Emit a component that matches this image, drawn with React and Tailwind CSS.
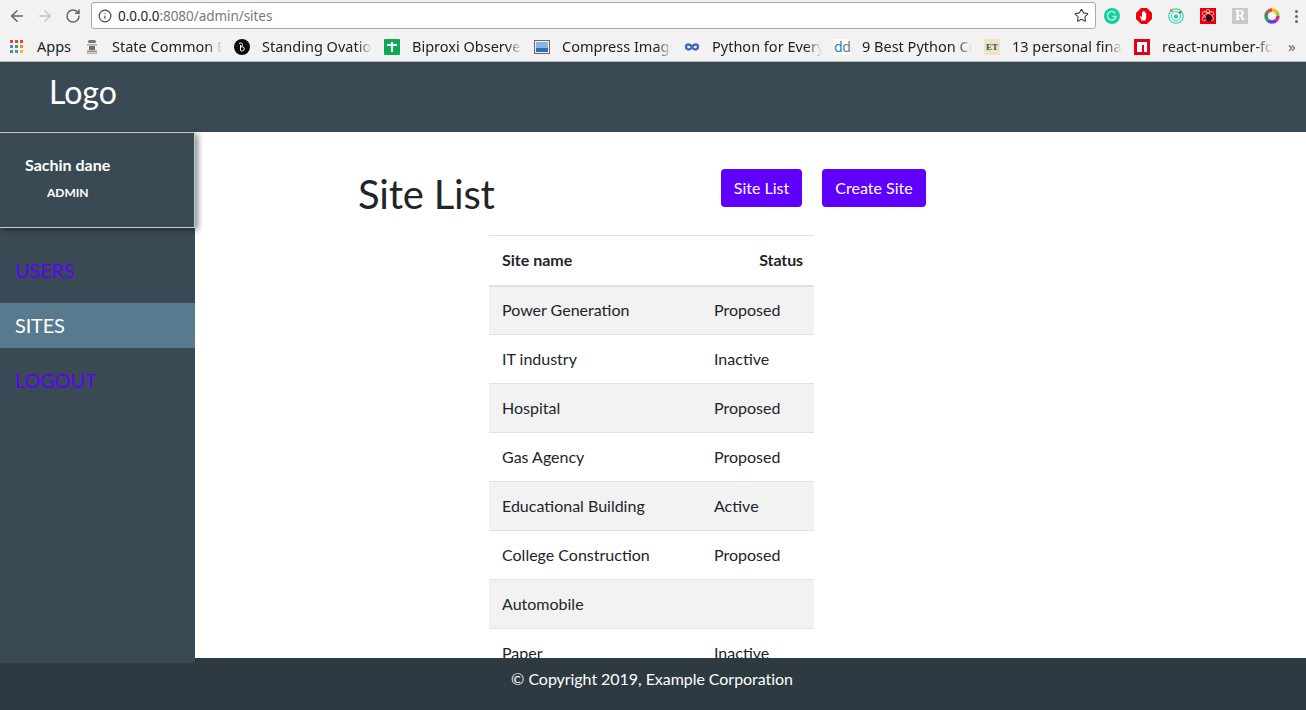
import { ArrowLeft, ArrowRight, RotateCw, Info, Star } from "lucide-react";

const bookmarks = [
  { label: "State Common Entrance", icon: "emblem" },
  { label: "Standing Ovation Award", icon: "ovation" },
  { label: "Biproxi Observer Page", icon: "biproxi" },
  { label: "Compress Images Online", icon: "compress" },
  { label: "Python for Everybody", icon: "infinity" },
  { label: "9 Best Python Courses", icon: "dd" },
  { label: "13 personal finance", icon: "et" },
  { label: "react-number-format", icon: "npm" },
];

const sites = [
  ["Power Generation", "Proposed"],
  ["IT industry", "Inactive"],
  ["Hospital", "Proposed"],
  ["Gas Agency", "Proposed"],
  ["Educational Building", "Active"],
  ["College Construction", "Proposed"],
  ["Automobile", ""],
  ["Paper", "Inactive"],
];

function BookmarkIcon({ type }) {
  if (type === "emblem")
    return (
      <svg width="16" height="16" viewBox="0 0 16 16">
        <rect x="4" y="1" width="8" height="3" rx="1.500" fill="#77776f" />
        <rect x="3" y="5" width="10" height="1.500" fill="#aaaaa0" />
        <rect x="5" y="7" width="6" height="4" fill="#6f6f67" />
        <rect x="3" y="11.500" width="10" height="1.500" fill="#8d8d84" />
        <rect x="3" y="13.500" width="10" height="1.500" fill="#b5b5ac" />
      </svg>
    );
  if (type === "ovation")
    return (
      <svg width="16" height="16" viewBox="0 0 16 16" fill="none">
        <circle cx="8" cy="8" r="8" fill="#0d0d0d" />
        <path d="M5 4.500c2-1 3.500-.5 3.500 1S7 7.500 6.800 7.800c2.500-.3 3.700.8 3.500 2.300S8 12.500 6.500 11.500V6" stroke="#fff" strokeWidth="1" />
      </svg>
    );
  if (type === "biproxi")
    return (
      <svg width="16" height="16" viewBox="0 0 16 16">
        <rect width="16" height="16" rx="1" fill="#0fa958" />
        <path d="M3 6h10M8 3v10" stroke="#fff" strokeWidth="2" />
      </svg>
    );
  if (type === "compress")
    return (
      <svg width="16" height="16" viewBox="0 0 16 16">
        <rect x="0.500" y="1.500" width="15" height="13" fill="#eef2f7" stroke="#667" />
        <rect x="2" y="3" width="12" height="6" fill="#8fb2e0" />
        <rect x="2" y="9" width="12" height="4" fill="#2f6db5" />
      </svg>
    );
  if (type === "infinity")
    return (
      <svg width="16" height="16" viewBox="0 0 16 16" fill="none">
        <path
          d="M8 8C7 6.200 6 5.500 4.500 5.500a2.500 2.500 0 0 0 0 5C6 10.500 7 9.800 8 8c1-1.800 2-2.500 3.500-2.500a2.500 2.500 0 0 1 0 5C10 10.500 9 9.800 8 8z"
          stroke="#3f68c8"
          strokeWidth="2.400"
        />
      </svg>
    );
  if (type === "dd")
    return (
      <div className="w-4 h-4 bg-white text-[14px] leading-4 text-center tracking-[-0.5px] font-['Noto_Sans',sans-serif]">
        <span className="text-[#1a7fd6]">d</span>
        <span className="text-[#777]">d</span>
      </div>
    );
  if (type === "et")
    return (
      <div className="w-4 h-4 bg-[#f0e2c4] text-[#2f5560] text-[9px] leading-4 font-bold text-center font-['Liberation_Serif',serif]">
        ET
      </div>
    );
  return (
    <svg width="16" height="16" viewBox="0 0 16 16">
      <rect width="16" height="16" fill="#e2001a" />
      <path d="M3 3h10v10h-3V6H8v7H3z" fill="#fff" />
    </svg>
  );
}

function AppsIcon() {
  const colors = ["#ea4335", "#ea4335", "#ea4335", "#4285f4", "#34a853", "#ea8a35", "#34a853", "#4285f4", "#fbbc05"];
  return (
    <div className="grid grid-cols-3 gap-[2px] w-[13px] h-[13px]">
      {colors.map((c, i) => (
        <span key={i} className="w-[3px] h-[3px]" style={{ background: c }} />
      ))}
    </div>
  );
}

function BrowserChrome() {
  return (
    <div className="bg-[#f2f2f2] h-[62px] border-b border-[#b8b8b8] font-['Noto_Sans',sans-serif]">
      {/* Toolbar */}
      <div className="h-[32px] flex items-center">
        <div className="w-[91px] flex items-center pl-[8px] gap-[10px] shrink-0">
          <ArrowLeft size={18} strokeWidth={2} className="text-[#5f6368]" />
          <ArrowRight size={18} strokeWidth={2} className="text-[#c4c6c9]" />
          <RotateCw size={16} strokeWidth={2.2} className="text-[#5f6368] ml-[1px]" />
        </div>
        <div className="w-[1005px] h-[27px] mt-[-1px] bg-white border border-[#a9a9a9] rounded-[3px] flex items-center pl-[6px] pr-[5px]">
          <Info size={14} strokeWidth={2} className="text-[#444]" />
          <span className="ml-[6px] mt-[1px] text-[13.500px] text-[#222] tracking-[-0.05px]">
            0.0.0.0<span className="text-[#77797c]">:8080/admin/sites</span>
          </span>
          <Star size={15} strokeWidth={1.8} className="ml-auto mr-[1px] text-[#444]" />
        </div>
        <div className="flex items-center ml-[8px] gap-[16px]">
          <svg width="16" height="16" viewBox="0 0 16 16" fill="none">
            <circle cx="8" cy="8" r="8" fill="#12cf9f" />
            <path d="M11.300 5.300A4.300 4.300 0 1 0 12 8.500H8.500" stroke="#c9f5e8" strokeWidth="1.300" />
          </svg>
          <svg width="16" height="16" viewBox="0 0 16 16">
            <path d="M5 0h6l5 5v6l-5 5H5l-5-5V5z" fill="#ee0010" />
            <path d="M5.500 12.500 L4 8.500l1 -.5 1 1.500V4h1v3.500V3h1.200v4.500V3.500h1V8V5h1v4.500c0 1.500-.6 3-1.200 3z" fill="#fff" />
          </svg>
          <svg width="16" height="16" viewBox="0 0 16 16" fill="none">
            <circle cx="8" cy="8" r="7.200" stroke="#1fe0b0" strokeWidth="1.200" />
            <circle cx="8" cy="8" r="4.500" stroke="#1fe0b0" strokeWidth="1" />
            <circle cx="8" cy="8.500" r="2" fill="#14cfa0" />
            <circle cx="3.500" cy="2.500" r="1.800" fill="#f08a3c" />
            <circle cx="12" cy="4.500" r="1.300" fill="#e0352c" />
          </svg>
          <svg width="16" height="16" viewBox="0 0 16 16" fill="none">
            <rect width="16" height="16" fill="#e8000f" />
            <ellipse cx="8" cy="8" rx="6.500" ry="2.500" transform="rotate(35 8 8)" stroke="#f7b5b5" strokeWidth="1" />
            <ellipse cx="8" cy="8" rx="6.500" ry="2.500" transform="rotate(-35 8 8)" stroke="#f7b5b5" strokeWidth="1" />
            <circle cx="8" cy="3.500" r="2" stroke="#f7b5b5" strokeWidth="1" />
            <ellipse cx="9" cy="10" rx="3" ry="3.500" fill="#2a1212" />
          </svg>
          <div className="w-4 h-4 bg-[#c9c9c9] text-white text-[14px] leading-4 text-center font-bold font-['Liberation_Serif',serif]">R</div>
          <svg width="16" height="16" viewBox="0 0 16 16" fill="none">
            <path d="M8 2a6 6 0 0 1 4.240 1.760" stroke="#f5c400" strokeWidth="3.500" />
            <path d="M12.240 3.760A6 6 0 0 1 14 8" stroke="#9acd32" strokeWidth="3.500" />
            <path d="M14 8a6 6 0 0 1-1.760 4.240" stroke="#e91e8c" strokeWidth="3.500" />
            <path d="M12.240 12.240A6 6 0 0 1 8 14" stroke="#8a2be2" strokeWidth="3.500" />
            <path d="M8 14a6 6 0 0 1-4.240-1.760" stroke="#3f51d8" strokeWidth="3.500" />
            <path d="M3.760 12.240A6 6 0 0 1 2 8" stroke="#2e9e5b" strokeWidth="3.500" />
            <path d="M2 8a6 6 0 0 1 1.760-4.240" stroke="#5b7d6a" strokeWidth="3.500" />
            <path d="M3.760 3.760A6 6 0 0 1 8 2" stroke="#f0452c" strokeWidth="3.500" />
          </svg>
          <div className="flex flex-col gap-[2px] ml-[-1px]">
            <span className="w-[3px] h-[3px] rounded-full bg-[#666]" />
            <span className="w-[3px] h-[3px] rounded-full bg-[#666]" />
            <span className="w-[3px] h-[3px] rounded-full bg-[#666]" />
          </div>
        </div>
      </div>
      {/* Bookmarks */}
      <div className="h-[29px] flex items-center text-[14.500px] text-[#222] pl-[10px]">
        <div className="flex items-center w-[74px] shrink-0">
          <AppsIcon />
          <span className="ml-[14px]">Apps</span>
        </div>
        {bookmarks.map((b) => (
          <div key={b.label} className="flex items-center w-[150px] shrink-0">
            <div className="w-4 h-4 shrink-0">
              <BookmarkIcon type={b.icon} />
            </div>
            <span className="ml-[12px] w-[110px] whitespace-nowrap overflow-hidden [mask-image:linear-gradient(to_right,black_86%,transparent)]">
              {b.label}
            </span>
          </div>
        ))}
        <span className="ml-[4px] text-[#666] text-[15px]">»</span>
      </div>
    </div>
  );
}

function Sidebar() {
  return (
    <aside className="relative z-10 w-[195px] h-[531px] shrink-0 bg-[#3a4a54] text-white">
      <div className="h-[96px] border border-l-0 border-[#c4c8ca] shadow-[3px_2px_6px_rgba(0,0,0,0.45)] pt-[22px] pl-[25px]">
        <div className="text-[16px] leading-5 font-bold">Sachin dane</div>
        <div className="text-[12px] leading-4 font-bold ml-[22px] mt-[10px]">ADMIN</div>
      </div>
      <nav className="mt-[20px] flex flex-col gap-[10px] text-[20px] tracking-[-0.2px]">
        <a className="h-[45px] flex items-center pl-[15px] pb-[2px] text-[#5a00ff]">USERS</a>
        <a className="h-[45px] flex items-center pl-[15px] pb-[2px] bg-[#587a8e] text-white">SITES</a>
        <a className="h-[45px] flex items-center pl-[15px] pb-[2px] text-[#5a00ff]">LOGOUT</a>
      </nav>
    </aside>
  );
}

export default function App() {
  return (
    <div className="h-[710px] w-[1306px] overflow-hidden flex flex-col bg-white font-['Lato',sans-serif] text-[#212529]">
      <BrowserChrome />
      <header className="h-[70px] bg-[#3a4a54] text-white text-[32px] flex items-center pl-[49px] pb-[10px]">Logo</header>

      <div className="flex h-[526px]">
        <Sidebar />
        <main className="flex-1 h-[526px] overflow-hidden pl-[163px] pt-[37px]">
          <div className="w-[568px] flex justify-between">
            <h1 className="text-[40px] leading-[48px] mt-[1px] tracking-[-0.2px]">Site List</h1>
            <div className="flex gap-[20px]">
              <button className="h-[38px] w-[81px] rounded bg-[#5f00ff] text-white text-[16px]">Site List</button>
              <button className="h-[38px] w-[104px] rounded bg-[#5f00ff] text-white text-[16px]">Create Site</button>
            </div>
          </div>
          <table className="w-[325px] ml-[131px] mt-[17px] border-collapse text-[16px] table-fixed">
            <thead>
              <tr className="h-[50px] border-t border-b-2 border-[#dee2e6]">
                <th className="w-[212px] text-left font-bold pl-[13px]">Site name</th>
                <th className="text-right font-bold pr-[11px] tracking-[-0.1px]">Status</th>
              </tr>
            </thead>
            <tbody>
              {sites.map(([name, status]) => (
                <tr key={name} className="h-[49px] border-b border-[#dee2e6] odd:bg-[#f2f2f2]">
                  <td className="pl-[13px]">{name}</td>
                  <td className="pl-[13px]">{status}</td>
                </tr>
              ))}
            </tbody>
          </table>
        </main>
      </div>

      <footer className="h-[52px] bg-[#2e3a41] text-white text-[16px] text-center pt-[11px] pr-[2px] leading-5 tracking-[-0.05px]">
        © Copyright 2019, Example Corporation
      </footer>
    </div>
  );
}
